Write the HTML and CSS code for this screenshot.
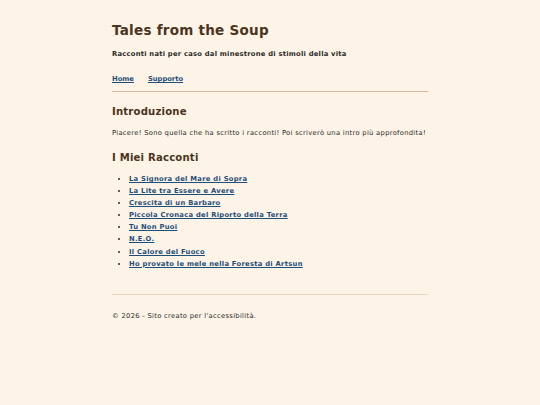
FILE: index.html
```html
<!DOCTYPE html>
<html lang="it">
<head>
<meta charset="utf-8">
<title>Tales from the Soup</title>
<link rel="stylesheet" href="styles.css">
</head>
<body>
<div class="page">
  <header class="site-header">
    <h1 class="site-title">Tales from the Soup</h1>
    <p class="tagline">Racconti nati per caso dal minestrone di stimoli della vita</p>
    <nav class="nav">
      <a href="#">Home</a>
      <a href="#">Supporto</a>
    </nav>
  </header>
  <main class="content">
    <h2 class="section-title">Introduzione</h2>
    <p class="intro">Piacere! Sono quella che ha scritto i racconti! Poi scriverò una intro più approfondita!</p>
    <h2 class="section-title">I Miei Racconti</h2>
    <ul class="stories">
      <li><a href="#">La Signora del Mare di Sopra</a></li>
      <li><a href="#">La Lite tra Essere e Avere</a></li>
      <li><a href="#">Crescita di un Barbaro</a></li>
      <li><a href="#">Piccola Cronaca del Riporto della Terra</a></li>
      <li><a href="#">Tu Non Puoi</a></li>
      <li><a href="#">N.E.O.</a></li>
      <li><a href="#">Il Calore del Fuoco</a></li>
      <li><a href="#">Ho provato le mele nella Foresta di Artsun</a></li>
    </ul>
  </main>
  <footer class="footer">
    <p>© 2026 - Sito creato per l'accessibilità.</p>
  </footer>
</div>
</body>
</html>
```
FILE: styles.css
```css
html, body {
  margin: 0;
  padding: 0;
  background: #fdf3e6;
}
body {
  font-family: "DejaVu Sans", Verdana, sans-serif;
  font-size: 6.75px;
  color: #2b2b2b;
}
.page {
  max-width: 316px;
  margin: 0 auto;
  padding-top: 22px;
}
.site-title {
  margin: 0;
  font-size: 13.5px;
  font-weight: bold;
  color: #4a3520;
  letter-spacing: 0.26px;
}
.tagline {
  margin: 12px 0 0;
  font-weight: bold;
  color: #2b2b2b;
  letter-spacing: 0.25px;
}
.nav {
  display: flex;
  gap: 14px;
  margin-top: 17px;
  padding-bottom: 8px;
  border-bottom: 1px solid #d9b99b;
}
a {
  color: #1f4e79;
  font-weight: bold;
}
.stories a {
  letter-spacing: 0.29px;
}
.section-title {
  margin: 14px 0 0;
  font-size: 10.1px;
  color: #4a3520;
  letter-spacing: 0.2px;
}
.intro {
  margin: 12px 0 0;
  letter-spacing: 0.3px;
  white-space: nowrap;
}
.intro + .section-title {
  margin-top: 15px;
}
.stories {
  margin: 10px 0 0;
  padding-left: 17px;
}
.stories li {
  line-height: 12.1px;
}
.footer {
  margin-top: 24px;
  border-top: 1px solid #ead7c3;
  padding-top: 17px;
}
.footer p {
  margin: 0;
  letter-spacing: 0.3px;
}
```
